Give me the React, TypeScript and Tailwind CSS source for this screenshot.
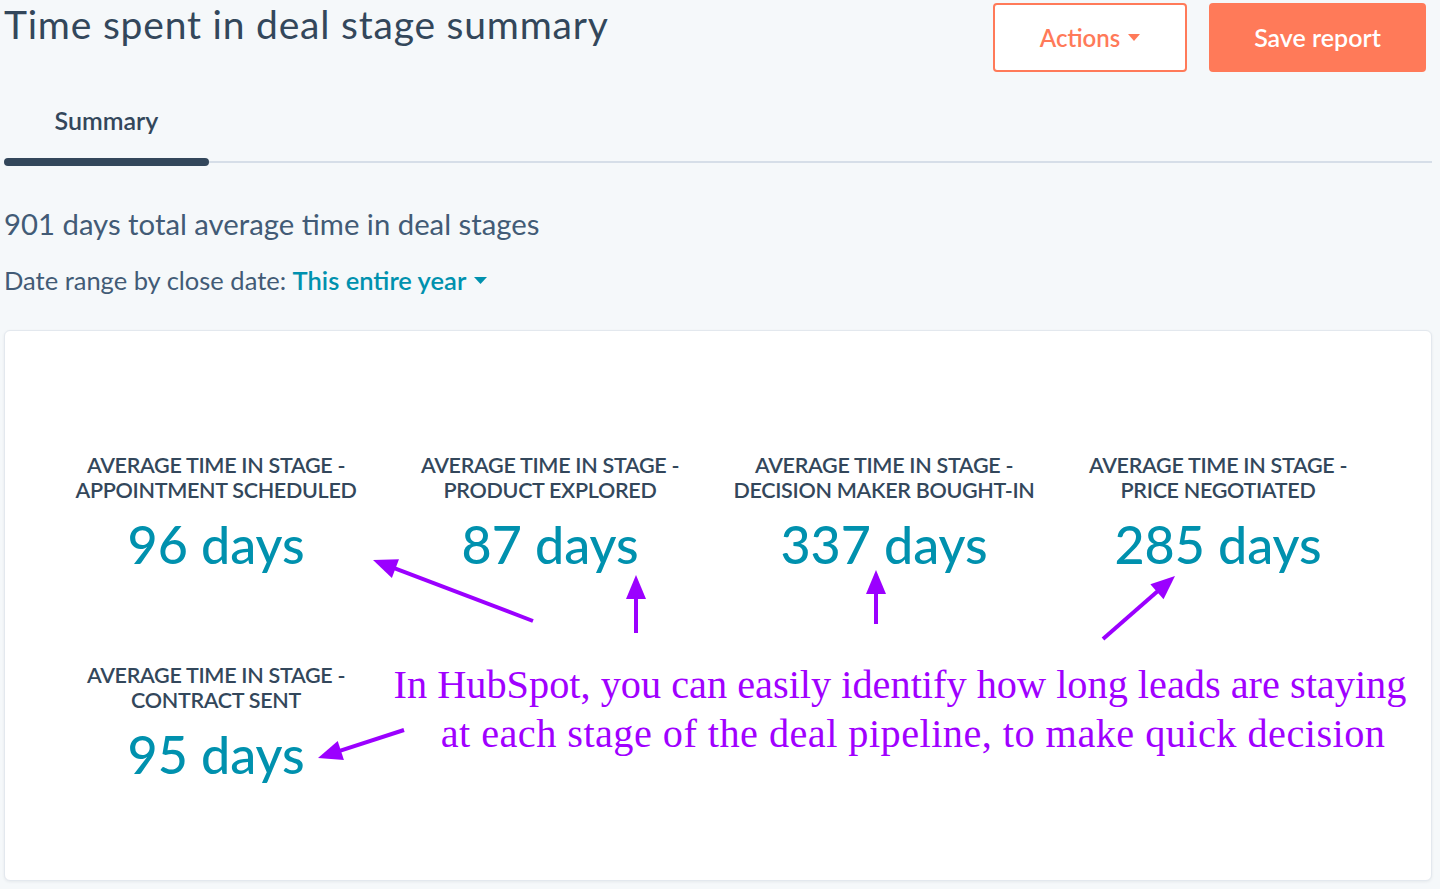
import React from "react";

type Pt = [number, number];

function Arrow({ from, to }: { from: Pt; to: Pt }) {
  const dx = to[0] - from[0];
  const dy = to[1] - from[1];
  const len = Math.hypot(dx, dy);
  const ux = dx / len;
  const uy = dy / len;
  const headLen = 24;
  const half = 10;
  const bx = to[0] - ux * headLen;
  const by = to[1] - uy * headLen;
  const pts = [
    `${to[0]},${to[1]}`,
    `${bx - uy * half},${by + ux * half}`,
    `${bx + uy * half},${by - ux * half}`,
  ].join(" ");
  return (
    <g>
      <line x1={from[0]} y1={from[1]} x2={bx + ux * 2} y2={by + uy * 2} stroke="#9b00ff" strokeWidth={4} />
      <polygon points={pts} fill="#9b00ff" />
    </g>
  );
}

const stats = [
  { stage: "APPOINTMENT SCHEDULED", value: "96 days" },
  { stage: "PRODUCT EXPLORED", value: "87 days" },
  { stage: "DECISION MAKER BOUGHT-IN", value: "337 days" },
  { stage: "PRICE NEGOTIATED", value: "285 days" },
];

function Stat({ stage, value }: { stage: string; value: string }) {
  return (
    <div className="flex flex-col items-center text-center">
      <div className="text-[21.5px] leading-[25px] font-semibold tracking-[-0.3px] text-[#33475b]">
        AVERAGE TIME IN STAGE -
        <br />
        {stage}
      </div>
      <div className="mt-[11px] text-[52px] leading-[60px] font-medium text-[#0091ae]">{value}</div>
    </div>
  );
}

export default function App() {
  return (
    <div className="w-[1440px] h-[889px] overflow-hidden bg-[#f5f8fa] font-['Lato',sans-serif] text-[#33475b]">
      <div className="flex justify-between pl-1 pr-[14px] pt-[3px]">
        <h1 className="text-[39px] leading-[46px] mt-[-2px] tracking-[0.8px]">Time spent in deal stage summary</h1>
        <div className="flex gap-[22px]">
          <button className="w-[194px] h-[69px] rounded-[4px] border-2 border-[#ff7a59] bg-white text-[24px] font-semibold text-[#ff7a59] flex items-center justify-center gap-2">
            Actions
            <svg width="12" height="7" viewBox="0 0 12 7">
              <path d="M0 0h12L6 7z" fill="#ff7a59" />
            </svg>
          </button>
          <button className="w-[217px] h-[69px] rounded-[4px] bg-[#ff7a59] text-[25px] font-semibold text-white">
            Save report
          </button>
        </div>
      </div>

      <div className="mt-[32px] flex items-end pl-1 pr-2">
        <div className="w-[205px] flex flex-col items-center">
          <span className="text-[25px] leading-[32px] font-semibold">Summary</span>
          <div className="mt-[22px] h-[8px] w-full rounded-full bg-[#33475b]" />
        </div>
        <div className="flex-1 h-[2px] mb-[3px] bg-[#d6dee8]" />
      </div>

      <p className="mt-[40px] pl-1 text-[29.3px] leading-[36px] text-[#425b76]">901 days total average time in deal stages</p>
      <p className="mt-[22px] pl-1 text-[25.5px] leading-[32px] text-[#425b76] flex items-center">
        Date range by close date:&nbsp;
        <span className="font-semibold text-[#0091ae]">This entire year</span>
        <svg className="ml-2" width="13" height="7" viewBox="0 0 13 7">
          <path d="M0 0h13L6.5 7z" fill="#0091ae" />
        </svg>
      </p>

      <div className="relative ml-1 mt-[34px] w-[1428px] h-[551px] rounded-[6px] border border-[#e3e8ee] bg-white shadow-[0_1px_3px_rgba(45,62,80,0.08)]">
        <div className="grid grid-cols-4 w-[1336px] ml-[44px] pt-[122px]">
          {stats.map((s) => (
            <Stat key={s.stage} stage={s.stage} value={s.value} />
          ))}
        </div>
        <div className="flex ml-[44px] mt-[89px]">
          <div className="w-[334px]">
            <Stat stage="CONTRACT SENT" value="95 days" />
          </div>
          <p className="w-[1044px] ml-[-5px] mt-[-3px] text-center font-['Liberation_Serif',serif] text-[40.3px] leading-[49px] text-[#a000ff]">
            <span className="block">In HubSpot, you can easily identify how long leads are staying</span>
            <span className="block pl-[26px] tracking-[0.45px]">at each stage of the deal pipeline, to make quick decision</span>
          </p>
        </div>
        <svg className="pointer-events-none absolute inset-0" width="1426" height="549">
          <Arrow from={[528, 290]} to={[368, 229]} />
          <Arrow from={[631, 302]} to={[631, 244]} />
          <Arrow from={[871, 293]} to={[871, 239]} />
          <Arrow from={[1098, 308]} to={[1170, 245]} />
          <Arrow from={[399, 399]} to={[313, 427]} />
        </svg>
      </div>
    </div>
  );
}
